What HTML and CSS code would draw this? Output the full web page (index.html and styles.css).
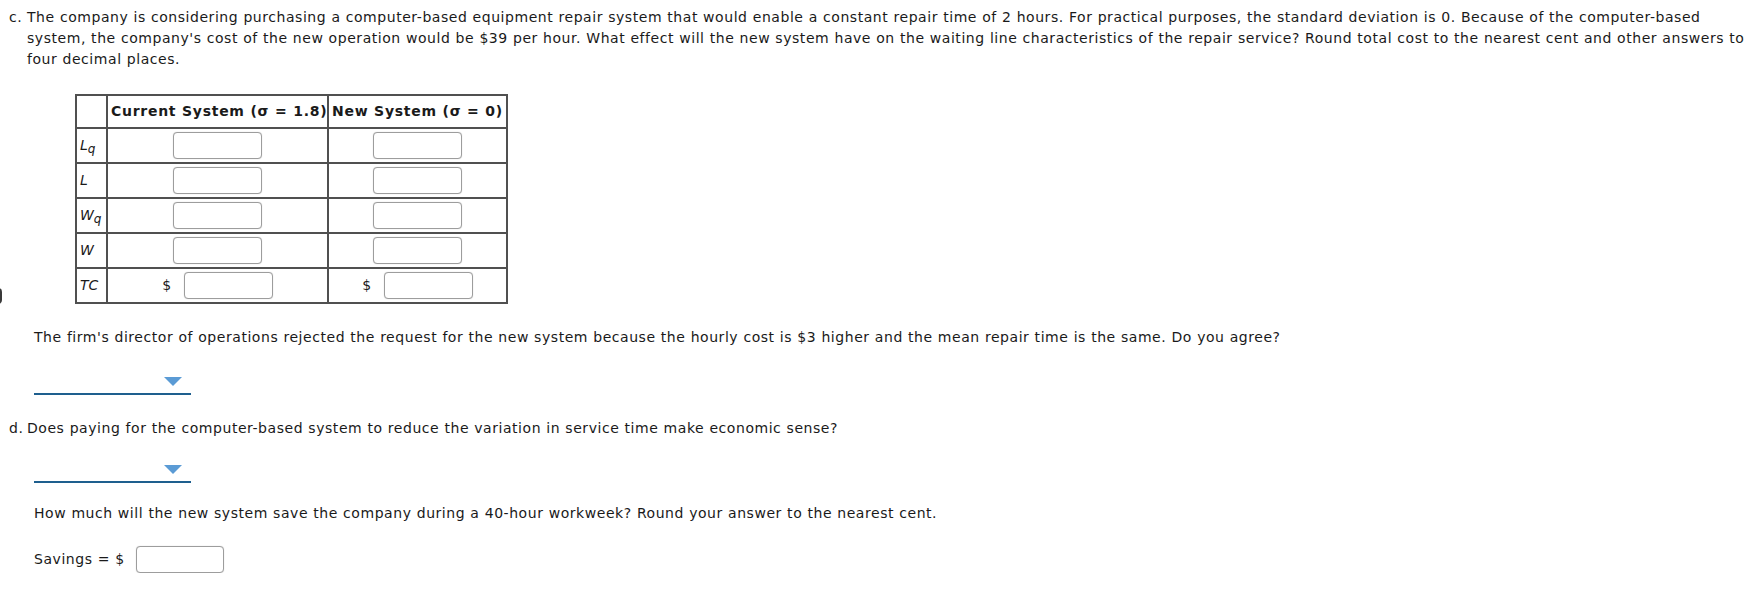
FILE: index.html
```html
<!DOCTYPE html>
<html lang="en">
<head>
<meta charset="utf-8">
<title>Waiting line</title>
<link rel="stylesheet" href="styles.css">
</head>
<body>
<div class="edge-mark"></div>

<div class="part part-c">
  <span class="part-label">c.</span>
  <p class="part-text">The company is considering purchasing a computer-based equipment repair system that would enable a constant repair time of 2 hours. For practical purposes, the standard deviation is 0. Because of the computer-based system, the company's cost of the new operation would be $39 per hour. What effect will the new system have on the waiting line characteristics of the repair service? Round total cost to the nearest cent and other answers to four decimal places.</p>
</div>

<div class="indent">
  <table class="grid">
    <colgroup>
      <col class="col-label">
      <col class="col-cur">
      <col class="col-new">
    </colgroup>
    <tr>
      <th></th>
      <th>Current System (σ = 1.8)</th>
      <th>New System (σ = 0)</th>
    </tr>
    <tr>
      <td class="label"><i>L<sub>q</sub></i></td>
      <td class="cell"><span class="box"></span></td>
      <td class="cell"><span class="box"></span></td>
    </tr>
    <tr>
      <td class="label"><i>L</i></td>
      <td class="cell"><span class="box"></span></td>
      <td class="cell"><span class="box"></span></td>
    </tr>
    <tr>
      <td class="label"><i>W<sub>q</sub></i></td>
      <td class="cell"><span class="box"></span></td>
      <td class="cell"><span class="box"></span></td>
    </tr>
    <tr>
      <td class="label"><i>W</i></td>
      <td class="cell"><span class="box"></span></td>
      <td class="cell"><span class="box"></span></td>
    </tr>
    <tr>
      <td class="label"><i>TC</i></td>
      <td class="cell"><span class="money"><span>$</span><span class="box"></span></span></td>
      <td class="cell"><span class="money"><span>$</span><span class="box"></span></span></td>
    </tr>
  </table>

  <p class="q q-firm">The firm's director of operations rejected the request for the new system because the hourly cost is $3 higher and the mean repair time is the same. Do you agree?</p>
  <div class="dropdown"><span class="caret"></span></div>
</div>

<div class="part part-d">
  <span class="part-label">d.</span>
  <p class="part-text">Does paying for the computer-based system to reduce the variation in service time make economic sense?</p>
</div>

<div class="indent">
  <div class="dropdown dropdown-d"><span class="caret"></span></div>
  <p class="q q-how">How much will the new system save the company during a 40-hour workweek? Round your answer to the nearest cent.</p>
  <div class="savings"><span>Savings = $</span><span class="box"></span></div>
</div>
</body>
</html>
```

FILE: styles.css
```css
html, body {
  background: #ffffff;
}
body {
  margin: 0;
  font-family: "DejaVu Sans", Verdana, sans-serif;
  font-size: 14px;
  line-height: 21px;
  letter-spacing: 0.55px;
  word-spacing: 0.2px;
  color: #1a1a1a;
  position: relative;
}

.edge-mark {
  position: absolute;
  left: -6px;
  top: 288px;
  width: 8px;
  height: 16px;
  border-radius: 4px;
  background: #3a3a3a;
}

.part {
  display: flex;
  padding-left: 9px;
  padding-right: 2px;
}
.part-label {
  flex: none;
  width: 18px;
}
.part-text {
  margin: 0;
}
.part-c {
  padding-top: 7px;
}
.part-d {
  margin-top: 23px;
}

.indent {
  padding-left: 34px;
}

.grid {
  border-collapse: collapse;
  table-layout: fixed;
  width: 431px;
  margin: 24px 0 0 41px;
}
.col-label { width: 31px; }
.col-cur { width: 221px; }
.col-new { width: 179px; }

.grid th,
.grid td {
  border: 2px solid #505050;
  padding: 0;
}
.grid th {
  height: 31px;
  font-weight: bold;
  letter-spacing: 0.72px;
  text-align: left;
  padding-left: 3px;
  white-space: nowrap;
}
.grid td {
  height: 33px;
}
.grid .label {
  padding-left: 3px;
  letter-spacing: 0;
}
.grid .label sub {
  font-size: 12px;
  line-height: 0;
  vertical-align: -3px;
}
.grid .cell {
  text-align: center;
}

.box {
  display: inline-block;
  box-sizing: border-box;
  width: 89px;
  height: 27px;
  border: 1px solid #9d9d9d;
  border-radius: 4px;
  box-shadow: 0 0 1px #c4c4c4;
  background: #ffffff;
  vertical-align: middle;
}

.money {
  display: inline-flex;
  align-items: center;
  gap: 12px;
}

.q {
  margin: 0;
}
.q-firm {
  margin-top: 23px;
}
.q-how {
  margin-top: 20px;
}

.dropdown {
  box-sizing: content-box;
  width: 157px;
  height: 15px;
  padding-top: 7px;
  padding-bottom: 7px;
  border-bottom: 2px solid #1e5f8e;
  display: flex;
  justify-content: flex-end;
  align-items: flex-end;
  margin-top: 16px;
}
.dropdown-d {
  margin-top: 13px;
}
.caret {
  width: 0;
  height: 0;
  border-left: 9px solid transparent;
  border-right: 9px solid transparent;
  border-top: 9px solid #5b9bd5;
  margin-right: 9px;
}

.savings {
  margin-top: 22px;
  display: flex;
  align-items: center;
  gap: 11px;
}
.savings .box {
  width: 88px;
}
```
